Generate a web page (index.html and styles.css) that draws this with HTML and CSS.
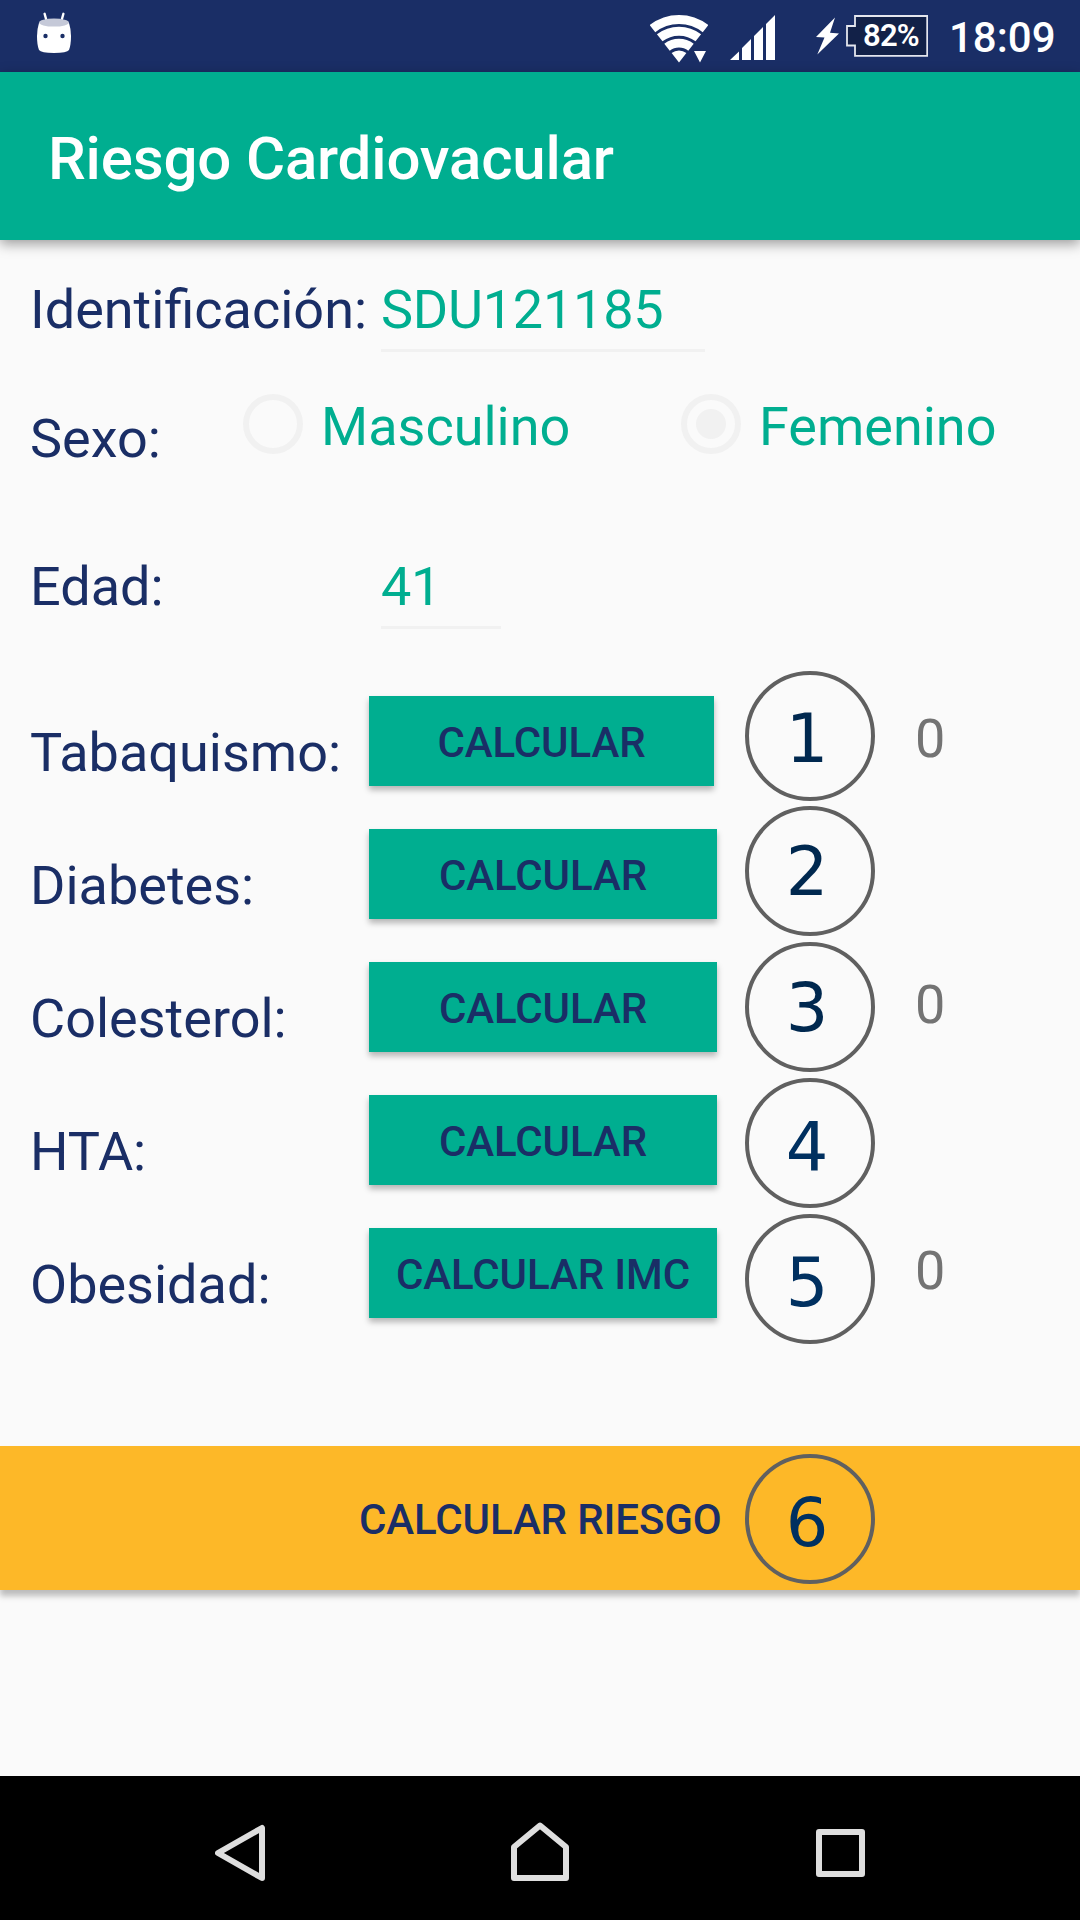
FILE: index.html
```html
<!DOCTYPE html>
<html lang="es">
<head>
<meta charset="utf-8">
<title>Riesgo Cardiovacular</title>
<link rel="stylesheet" href="styles.css">
</head>
<body>
<div class="status">
  <svg class="droid" width="34" height="41" viewBox="37 12 34 41">
    <path d="M44.6 13.8 46.6 21M63.4 13.8 61.4 21" stroke="#fff" stroke-width="2.4" stroke-linecap="round"/>
    <path d="M39 23Q37 29 37 36Q37 45 39 50Q41 53 54 53Q67 53 69 50Q71 45 71 36Q71 29 69 23Z" fill="#fff"/>
    <ellipse cx="54" cy="22.6" rx="15" ry="4" fill="#c5c9d8"/>
    <circle cx="45.5" cy="36" r="2.2" fill="#1a2e66"/><circle cx="62.5" cy="36" r="2.2" fill="#1a2e66"/>
  </svg>
  <svg class="wifi" width="58" height="49" viewBox="650 14 58 49">
    <g fill="none" stroke="#fff">
      <path d="M652.5 28.6A43 43 0 0 1 705.5 28.6" stroke-width="9"/>
      <path d="M659.7 37.8A31.3 31.3 0 0 1 698.3 37.8" stroke-width="9"/>
      <path d="M667 47.2A19.4 19.4 0 0 1 691 47.2" stroke-width="8.8"/>
    </g>
    <path d="M671.6 53A12 12 0 0 1 686.4 53L679 62.5ZM694 51H706L700 62.5Z" fill="#fff"/>
  </svg>
  <svg class="signal" width="45" height="45" viewBox="730 15 45 45">
    <path d="M730 60 739 51.5V60ZM742 48 751 39V60H742ZM754 36 763 27V60H754ZM766 24 775 15V60H766Z" fill="#fff"/>
  </svg>
  <svg class="bolt" width="24" height="38" viewBox="816 17 24 38">
    <path d="M835 17.5 816 37 824.5 37.5 817.3 54.5 839 33.4 830 32.7Z" fill="#fff"/>
  </svg>
  <div class="battery">
    <svg width="82" height="42" viewBox="846 15 82 42">
      <path d="M855 16H927.2V55.8H855V45.5H847V26H855Z" fill="#122148" stroke="#e4e6ee" stroke-width="1.8"/>
    </svg>
    <span class="level">82%</span>
  </div>
  <span class="clock">18:09</span>
</div>

<header class="appbar"><h1>Riesgo Cardiovacular</h1></header>

<main>
  <div class="row id-row">
    <span class="label">Identificación:</span>
    <span class="field id-field">SDU121185</span>
  </div>
  <div class="row sex-row">
    <span class="label sex-label">Sexo:</span>
    <div class="option">
      <span class="radio"></span><span class="option-text">Masculino</span>
    </div>
    <div class="option">
      <span class="radio checked"></span><span class="option-text">Femenino</span>
    </div>
  </div>
  <div class="row age-row">
    <span class="label">Edad:</span>
    <span class="field age-field">41</span>
  </div>

  <div class="factors">
    <div class="labels">
      <span>Tabaquismo:</span><span>Diabetes:</span><span>Colesterol:</span><span>HTA:</span><span>Obesidad:</span>
    </div>
    <div class="buttons">
      <button class="btn narrow">CALCULAR</button>
      <button class="btn">CALCULAR</button>
      <button class="btn">CALCULAR</button>
      <button class="btn">CALCULAR</button>
      <button class="btn">CALCULAR IMC</button>
    </div>
    <div class="steps">
      <span class="step s1">1</span>
      <span class="step s2">2</span>
      <span class="step s3">3</span>
      <span class="step s4">4</span>
      <span class="step s5">5</span>
    </div>
    <div class="values">
      <span>0</span><span></span><span>0</span><span></span><span>0</span>
    </div>
  </div>

  <div class="total">
    <span class="total-text">CALCULAR RIESGO</span>
    <span class="step s6">6</span>
  </div>
</main>

<nav class="navbar">
  <svg width="50" height="58" viewBox="215 1824 50 58"><path d="M262 1828V1878L218 1853Z"/></svg>
  <svg class="home" width="58" height="60" viewBox="511 1822 58 60"><path d="M514 1878V1847L540 1825.5 566 1847V1878Z"/></svg>
  <svg width="49" height="48" viewBox="816 1829 49 48"><rect x="819" y="1832" width="43" height="42"/></svg>
</nav>
</body>
</html>
```
FILE: styles.css
```css
* { box-sizing: border-box; }
body {
  margin: 0;
  width: 1080px;
  height: 1920px;
  display: flex;
  flex-direction: column;
  background: #fafafa;
  font-family: Roboto, sans-serif;
  font-size: 54px;
  line-height: 64px;
  color: #1a2e66;
  overflow: hidden;
}
svg { display: block; flex: none; }

.status {
  height: 72px;
  flex: none;
  display: flex;
  align-items: flex-start;
  background: #1a2e66;
  color: #fff;
}
.droid { margin: 12px 0 0 37px; }
.wifi { margin: 14px 0 0 579px; }
.signal { margin: 15px 0 0 22px; }
.bolt { margin: 17px 0 0 41px; }
.battery { margin: 15px 0 0 6px; position: relative; }
.level {
  position: absolute;
  left: 8px;
  width: 74px;
  top: 0;
  text-align: center;
  font-size: 31px;
  line-height: 42px;
  font-weight: 600;
  letter-spacing: -.8px;
}
.clock {
  margin: 13px 0 0 21px;
  font-size: 42px;
  line-height: 50px;
  font-weight: 500;
}

.appbar {
  height: 168px;
  flex: none;
  padding: 51px 48px 0;
  background: #00ae90;
  color: #fff;
  box-shadow: 0 4px 12px rgba(0, 0, 0, .38);
}
h1 {
  margin: 0;
  font-size: 60px;
  line-height: 72px;
  font-weight: 500;
  letter-spacing: -.16px;
}

main { flex: 1; padding-top: 38px; }
.row { display: flex; align-items: flex-start; padding-left: 30px; }
.label { width: 351px; flex: none; white-space: nowrap; }
.field {
  height: 74px;
  border-bottom: 3px solid #f1f1f1;
  color: #00ae90;
  letter-spacing: -.25px;
}
.id-field { width: 324px; }
.age-field { width: 120px; }
.sex-row { margin-top: 42px; height: 77px; }
.sex-label { width: 213px; padding-top: 13px; }
.option { display: flex; flex: none; width: 438px; gap: 18px; color: #00ae90; }
.option:last-child { width: 399px; }
.option-text { padding-top: 1px; }
.radio {
  width: 60px;
  height: 60px;
  border: 6px solid #f1f1f1;
  border-radius: 50%;
  flex: none;
}
.radio.checked {
  background: radial-gradient(circle, #f1f1f1 14.5px, transparent 15.5px);
}
.age-row { margin-top: 84px; }

.factors {
  display: grid;
  grid-template-columns: 339px 376px 170px auto;
  height: 673px;
  margin-top: 42px;
  padding-left: 30px;
}
.labels { display: grid; grid-auto-rows: 64px; gap: 69px; padding-top: 50px; }
.buttons { display: grid; grid-auto-rows: 90px; gap: 43px; padding-top: 25px; }
.steps {
  display: grid;
  grid-template-rows: 129px;
  grid-auto-rows: 130px;
  gap: 6px;
}
.values {
  display: grid;
  grid-auto-rows: 64px;
  gap: 69px;
  padding-top: 36px;
  color: #737373;
}
.btn {
  width: 348px;
  border: 0;
  padding: 4px 0 0;
  background: #00ae90;
  color: #1a2e66;
  font: 500 42px/86px Roboto, sans-serif;
  letter-spacing: -.1px;
  box-shadow: 0 4px 6px rgba(0, 0, 0, .28);
}
.btn.narrow { width: 345px; }

.step {
  width: 130px;
  height: 130px;
  border: 4px solid #606060;
  border-radius: 50%;
  padding-right: 6px;
  text-align: center;
  font-family: "DejaVu Sans", sans-serif;
  font-size: 67px;
  line-height: 80px;
  color: #00284f;
}
.s1 { padding-top: 24px; }
.s2 { padding-top: 22px; }
.s3 { padding-top: 22px; }
.s4 { padding-top: 26px; color: #003060; }
.s5 { padding-top: 25px; color: #003060; }
.s6 { padding-top: 25px; color: #003060; }

.total {
  display: grid;
  grid-template-columns: 361px 384px auto;
  height: 144px;
  margin-top: 102px;
  padding-top: 8px;
  background: #fdb828;
  box-shadow: 0 6px 6px rgba(0, 0, 0, .25);
}
.total-text {
  grid-column: 2;
  padding-top: 41px;
  font-size: 42px;
  line-height: 50px;
  font-weight: 500;
  letter-spacing: -.12px;
  margin-left: -2px;
}

.navbar {
  height: 144px;
  flex: none;
  display: flex;
  justify-content: space-between;
  align-items: center;
  padding: 9px 215px 0;
  background: #000;
}
.home { margin: 0 1px 2px 0; }
.navbar path, .navbar rect {
  fill: none;
  stroke: #dedede;
  stroke-width: 6;
  stroke-linejoin: round;
}
```
